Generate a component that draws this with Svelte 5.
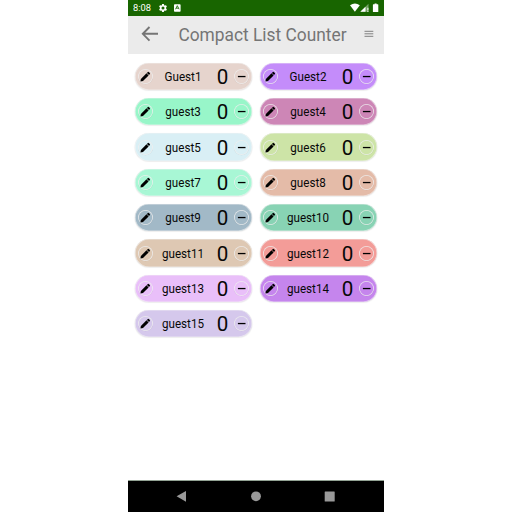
<script>
  const guests = [
    ['Guest1', '#e6d4cd'],
    ['Guest2', '#c48cfa'],
    ['guest3', '#98f6c9'],
    ['guest4', '#cd86b6'],
    ['guest5', '#d9eff5'],
    ['guest6', '#cde4a7'],
    ['guest7', '#a8f7d5'],
    ['guest8', '#e4bba8'],
    ['guest9', '#a2b9c7'],
    ['guest10', '#88d3b4'],
    ['guest11', '#dec8b3'],
    ['guest12', '#f39c98'],
    ['guest13', '#e9bff9'],
    ['guest14', '#c585ed'],
    ['guest15', '#d5c8ec']
  ].map(([name, color]) => ({ name, color }));

  let counts = $state(guests.map(() => 0));
</script>

<div class="phone">
  <header class="status">
    <span class="time">8:08</span>
    <svg class="gear" width="10" height="10" viewBox="0 0 24 24"><path fill="#fff" d="M19.14 12.94c.04-.3.06-.61.06-.94 0-.32-.02-.64-.07-.94l2.03-1.58a.49.49 0 0 0 .12-.61l-1.92-3.32a.49.49 0 0 0-.59-.22l-2.39.96c-.5-.38-1.03-.7-1.62-.94l-.36-2.54a.48.48 0 0 0-.48-.41h-3.84c-.24 0-.43.17-.47.41l-.36 2.54c-.59.24-1.13.57-1.62.94l-2.39-.96c-.22-.08-.47 0-.59.22L2.74 8.87c-.12.21-.08.47.12.61l2.03 1.58c-.05.3-.09.63-.09.94s.02.64.07.94l-2.03 1.58a.49.49 0 0 0-.12.61l1.92 3.32c.12.22.37.29.59.22l2.39-.96c.5.38 1.03.7 1.62.94l.36 2.54c.05.24.24.41.48.41h3.84c.24 0 .44-.17.47-.41l.36-2.54c.59-.24 1.13-.56 1.62-.94l2.39.96c.22.08.47 0 .59-.22l1.920-3.320c.12-.22.07-.47-.12-.61zM12 15.600a3.600 3.600 0 1 1 0-7.200 3.600 3.600 0 0 1 0 7.200z" /></svg>
    <svg class="app" width="7" height="8" viewBox="0 0 7 8"><rect width="6.600" height="7.400" y=".3" rx=".8" fill="#fff" /><path d="M1.500 5.300 3.300 1.700 5.100 5.300M2.200 4.200H4.400" fill="none" stroke="#186500" stroke-width=".85" /></svg>
    <span class="grow"></span>
    <svg width="29" height="10" viewBox="0 0 29 10" fill="#fff">
      <path d="M0 2.300Q5-1.200 9.800 2.300L4.900 8.800Z" />
      <path d="M18.500.7V8.800H10.300Z" fill-opacity=".4" />
      <path d="M15.500 3.700V8.800H10.300Z" />
      <path d="M17.400 4.800h1v2.600h-1zM17.400 8h1v.9h-1z" />
      <path d="M24.600.4h2v.8h1.200q.5 0 .5.500v6.800q0 .5-.5.500h-4.400q-.5 0-.5-.5V1.700q0-.5.5-.5h1.200z" />
    </svg>
  </header>

  <nav class="bar">
    <svg class="back" width="18" height="16" viewBox="0 0 18 16"><path d="M8.500 1 1.800 7.800 8.500 14.600M1.800 7.800H17" fill="none" stroke="#757575" stroke-width="1.900" /></svg>
    <h1>Compact List Counter</h1>
    <svg class="menu" width="10" height="8" viewBox="0 0 10 8"><path d="M.5 1.300h8.800M.5 3.800h8.800M.5 6.300h8.800" stroke="#808080" stroke-width="1" /></svg>
  </nav>

  <main>
    {#each guests as guest, i}
      <div class="pill" style:background-color={guest.color}>
        <button class="round" aria-label="Edit">
          <svg width="15" height="15" viewBox="0 0 15 15"><path d="M2.400 12.500 2.900 9.900 8.500 4.300 10.600 6.400 5 12Z" /><path d="M8.900 3.900 9.900 2.900Q10.300 2.600 10.700 2.900L11.900 4.100Q12.200 4.500 11.900 4.900L11 5.900Z" /></svg>
        </button>
        <span class="name">{guest.name}</span>
        <button class="count" onclick={() => counts[i]++}>{counts[i]}</button>
        <button class="round" aria-label="Decrease" onclick={() => counts[i]--}>
          <svg width="15" height="15" viewBox="0 0 15 15"><path d="M3.900 6.900H11.500V8.200H3.900Z" /></svg>
        </button>
      </div>
    {/each}
  </main>

  <footer>
    <svg width="256" height="31" viewBox="0 0 256 31" fill="#999">
      <path d="M48.600 15.300 58 10V20.800Z" />
      <circle cx="128" cy="15.300" r="4.900" />
      <rect x="196.700" y="10.400" width="10" height="10" rx=".5" />
    </svg>
  </footer>
</div>

<style>
  :global(body) { background: #fff; }
  .phone {
    width: 256px;
    height: 512px;
    margin: 0 auto;
    display: flex;
    flex-direction: column;
    background: #fff;
    font-family: Roboto, sans-serif;
    overflow: hidden;
  }
  svg { display: block; flex: none; }
  .status {
    height: 15.500px;
    flex: none;
    box-sizing: border-box;
    padding: 0 5px;
    display: flex;
    align-items: center;
    background: #186500;
    color: #fff;
  }
  .time {
    width: 25px;
    padding-top: 1px;
    font-size: 9.500px;
    line-height: 14px;
    transform: scaleX(.98);
    transform-origin: left;
  }
  .app { margin-left: 6px; }
  .grow { flex: 1; }
  .bar {
    height: 38px;
    flex: none;
    display: flex;
    align-items: center;
    background: #ebebeb;
  }
  .back { margin-left: 13px; margin-top: -1px; }
  h1 {
    width: 187px;
    margin: 0 0 0 9.500px;
    font-size: 18px;
    font-weight: 400;
    line-height: 38px;
    color: #757575;
    text-align: center;
    white-space: nowrap;
    transform: scaleX(.963);
  }
  .menu { margin-left: 8px; margin-top: -2px; }
  main {
    flex: 1;
    padding: 9.400px 7px 0;
    display: grid;
    grid-template-columns: 117px 117px;
    column-gap: 8px;
    grid-auto-rows: 27.300px;
    row-gap: 8px;
    align-content: start;
  }
  .pill {
    display: flex;
    align-items: center;
    padding: 0 3px;
    border-radius: 14px;
    box-shadow: inset 0 0 0 .6px rgba(245, 245, 245, .7), 0 .5px 1px .6px rgba(0, 0, 0, .07);
    color: #080808;
  }
  button {
    padding: 0;
    border: 0;
    background: none;
    font: inherit;
    color: inherit;
  }
  .round {
    width: 15px;
    height: 15px;
    flex: none;
    border-radius: 50%;
    box-shadow: inset 0 0 0 .8px rgba(240, 240, 240, .85), 0 .3px .5px rgba(0, 0, 0, .12);
  }
  .name {
    width: 60px;
    padding-top: 1px;
    font-size: 12px;
    line-height: 26px;
    text-align: center;
    transform: scaleX(.97);
  }
  .count {
    width: 19px;
    margin-right: 2px;
    padding-top: 1px;
    font-size: 21px;
    line-height: 26px;
    text-align: center;
    transform: scaleX(.98);
  }
  footer { flex: none; background: #000; border-top: 1px solid #93a394; height: 31px; }
</style>
